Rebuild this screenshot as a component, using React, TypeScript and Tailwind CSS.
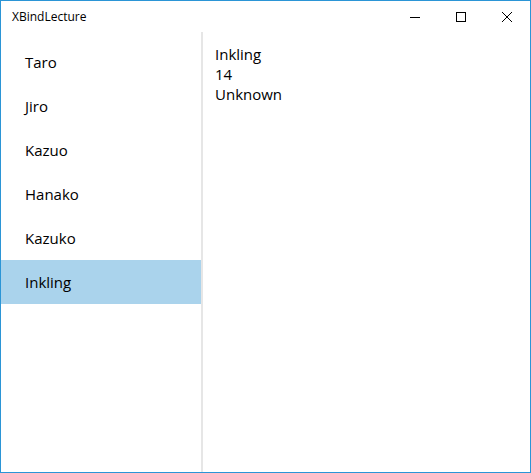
import React, { useState } from 'react';

const people = [
  { name: 'Taro', age: 20, kind: 'Human' },
  { name: 'Jiro', age: 18, kind: 'Human' },
  { name: 'Kazuo', age: 30, kind: 'Human' },
  { name: 'Hanako', age: 22, kind: 'Human' },
  { name: 'Kazuko', age: 25, kind: 'Human' },
  { name: 'Inkling', age: 14, kind: 'Unknown' },
];

const App: React.FC = () => {
  const [selected, setSelected] = useState(5);
  const p = people[selected];

  return (
    <div
      className="w-[531px] h-[473px] border border-[#2b95d6] bg-white flex flex-col text-black"
      style={{ fontFamily: '"Open Sans", "Noto Sans", sans-serif' }}
    >
      <div className="h-[31px] flex items-center shrink-0">
        <div className="pl-[11px] text-[12px] flex-1">XBindLecture</div>
        <button className="w-[46px] h-[31px] flex items-center justify-center">
          <svg width="10" height="10" viewBox="0 0 10 10">
            <path d="M0 5.5h10" stroke="black" strokeWidth="1" />
          </svg>
        </button>
        <button className="w-[46px] h-[31px] flex items-center justify-center">
          <svg width="10" height="10" viewBox="0 0 10 10">
            <rect x="0.5" y="0.5" width="9" height="9" fill="none" stroke="black" strokeWidth="1" />
          </svg>
        </button>
        <button className="w-[46px] h-[31px] flex items-center justify-center">
          <svg width="10" height="10" viewBox="0 0 10 10">
            <path d="M0 0L10 10M10 0L0 10" stroke="black" strokeWidth="1" />
          </svg>
        </button>
      </div>
      <div className="flex flex-1 min-h-0">
        <div className="w-[200px] pt-2 shrink-0">
          {people.map((x, i) => (
            <div
              key={x.name}
              onClick={() => setSelected(i)}
              className={`h-[44px] flex items-center pl-6 text-[15px] cursor-default ${i === selected ? 'bg-[#aad3ec]' : ''}`}
            >
              {x.name}
            </div>
          ))}
        </div>
        <div className="w-[2px] bg-[#e6e6e6] shrink-0" />
        <div className="flex-1 pl-3 pt-3 text-[15px] leading-[20px]">
          <div>{p.name}</div>
          <div>{p.age}</div>
          <div>{p.kind}</div>
        </div>
      </div>
    </div>
  );
};

export default App;
